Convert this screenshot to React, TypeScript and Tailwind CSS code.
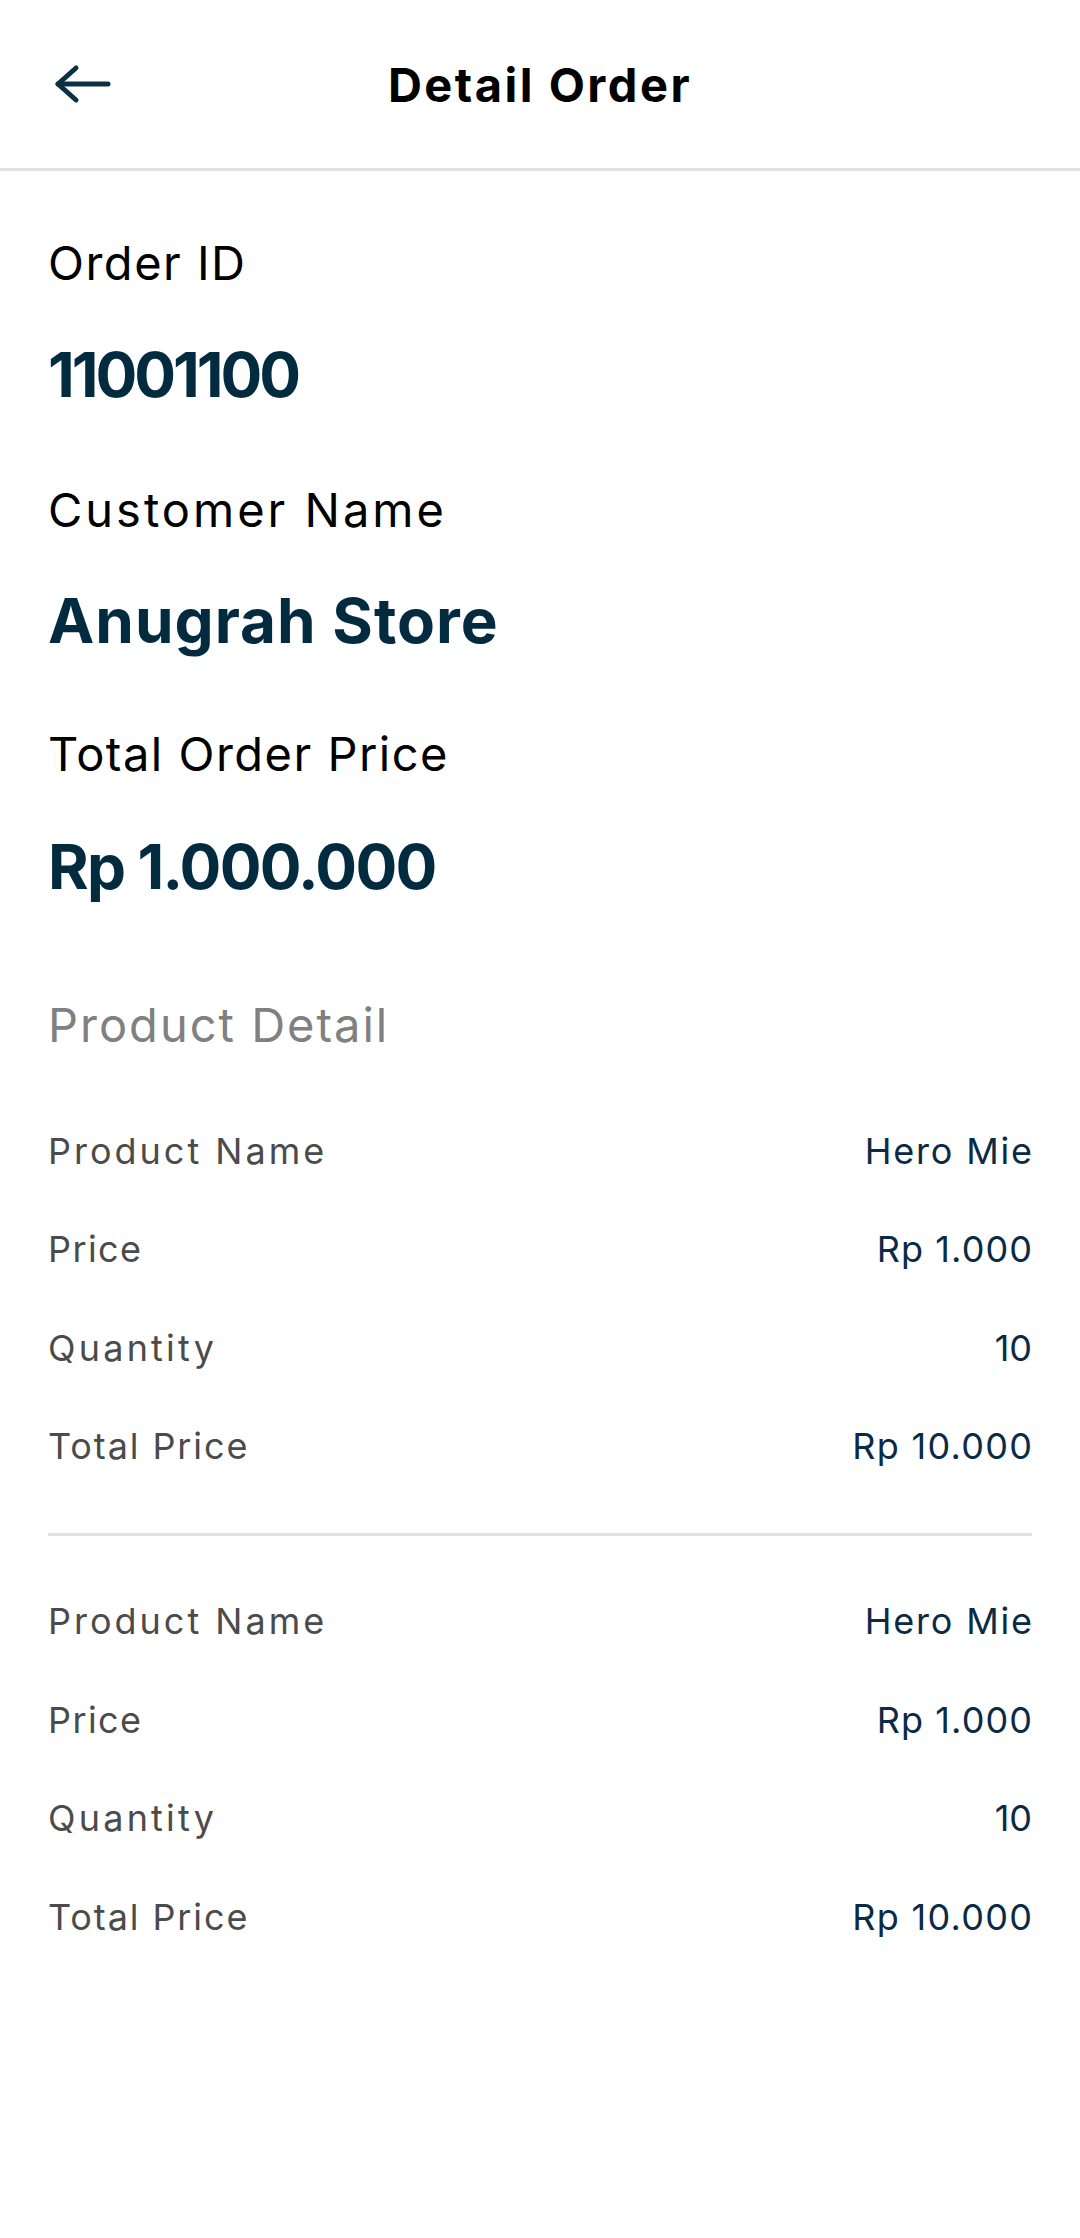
import React from "react";

const rows = [
  { l: "Product Name", lt: "tracking-[3px]", v: "Hero Mie", vt: "tracking-[1.8px] -mr-[1.8px]" },
  { l: "Price", lt: "tracking-[1.4px]", v: "Rp 1.000", vt: "tracking-[1.1px] -mr-[1.1px]" },
  { l: "Quantity", lt: "tracking-[3.2px]", v: "10", vt: "" },
  { l: "Total Price", lt: "tracking-[1.9px]", v: "Rp 10.000", vt: "tracking-[1.3px] -mr-[1.3px]" },
];

function ProductBlock({ last }: { last?: boolean }) {
  return (
    <div className={last ? "flex flex-col gap-[62.5px]" : "flex flex-col gap-[62.5px] pb-[69px] mb-[67px] border-b-[3px] border-[#e0e0e0]"}>
      {rows.map((r) => (
        <div key={r.l} className="flex justify-between h-[36px] text-[36px] leading-none">
          <span className={"text-[#4b4b4b] " + r.lt}>{r.l}</span>
          <span className={"text-[#0b2a45] " + r.vt}>{r.v}</span>
        </div>
      ))}
    </div>
  );
}

export default function App() {
  return (
    <div className="w-[1080px] min-h-[2238px] bg-white" style={{ fontFamily: "Inter, 'Noto Sans', sans-serif" }}>
      <div className="flex items-center h-[171px] border-b-[3px] border-[#e0e0e0]">
        <div className="w-[114px] pl-[54px] flex items-center">
          <svg width="60" height="40" viewBox="54 64 60 40" fill="none" stroke="#0b3045" strokeWidth="5" strokeLinecap="round" strokeLinejoin="round">
            <path d="M76 68 L58 84 L76 100" />
            <path d="M58 84 H108" />
          </svg>
        </div>
        <div className="flex-1 text-center text-[47px] leading-none font-bold text-black tracking-[2.5px]">Detail Order</div>
        <div className="w-[114px]" />
      </div>
      <div className="px-[48px] flex flex-col">
        <div className="mt-[68px] text-[47px] leading-none text-black tracking-[1.5px]">Order ID</div>
        <div className="mt-[57.5px] text-[62px] leading-none font-bold text-[#032b3f] tracking-[-3px]">11001100</div>
        <div className="mt-[80.5px] text-[47px] leading-none text-black tracking-[3px]">Customer Name</div>
        <div className="mt-[56.5px] text-[62px] leading-none font-bold text-[#032b3f] tracking-[1px]">Anugrah Store</div>
        <div className="mt-[78.5px] text-[47px] leading-none text-black tracking-[1.5px]">Total Order Price</div>
        <div className="mt-[58.5px] text-[62px] leading-none font-bold text-[#032b3f] tracking-[-1.7px]">Rp 1.000.000</div>
        <div className="mt-[103px] text-[47px] leading-none text-[#808080] tracking-[2px]">Product Detail</div>
        <div className="mt-[85px]">
          <ProductBlock />
          <ProductBlock last />
        </div>
      </div>
    </div>
  );
}
